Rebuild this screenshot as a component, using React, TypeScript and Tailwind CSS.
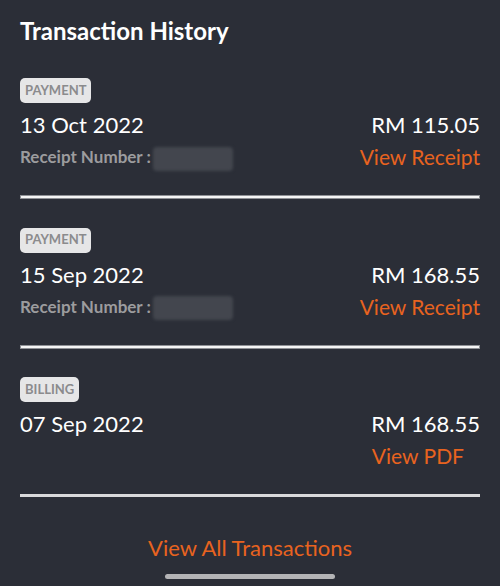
const ORANGE = 'text-[#e8631f]';

type Txn = {
  kind: string;
  date: string;
  amount: string;
  link: string;
  receipt?: boolean;
  lastLine?: boolean;
};

const TXNS: Txn[] = [
  { kind: 'PAYMENT', date: '13 Oct 2022', amount: 'RM 115.05', link: 'View Receipt', receipt: true },
  { kind: 'PAYMENT', date: '15 Sep 2022', amount: 'RM 168.55', link: 'View Receipt', receipt: true },
  { kind: 'BILLING', date: '07 Sep 2022', amount: 'RM 168.55', link: 'View PDF', lastLine: true },
];

function Redacted() {
  return (
    <span className="inline-block align-middle ml-[2px] w-[80px] h-[24px] rounded-[4px] bg-[#43464e] blur-[1.5px]" />
  );
}

function TxnItem({ t, first }: { t: Txn; first: boolean }) {
  return (
    <div className={first ? 'pt-[32px]' : 'pt-[27px]'}>
      <span className="inline-flex items-center h-[25px] px-[5px] rounded-[5px] bg-[#e6e6e7] text-[#8b8b8d] text-[13px] font-bold">
        {t.kind}
      </span>
      <div className="mt-[8px] flex justify-between items-start">
        <div className="flex flex-col">
          <span className="text-white text-[22px] leading-[27px]">{t.date}</span>
          <span className="mt-[6px] h-[25px] text-[#9c9c9e] text-[17px] font-bold leading-[25px] whitespace-nowrap">
            {t.receipt && (<>Receipt Number :<Redacted /></>)}
          </span>
        </div>
        <div className="flex flex-col items-end">
          <span className="text-white text-[22px] leading-[27px]">{t.amount}</span>
          <span className={`mt-[6px] text-[21px] leading-[25px] ${ORANGE} ${t.lastLine ? 'pr-[16px]' : ''}`}>{t.link}</span>
        </div>
      </div>
      {t.lastLine ? (
        <div className="mt-[26px] h-[3px] bg-[#d9d9db]" />
      ) : (
        <div className="mt-[26px] h-[4px] border border-[#8e9095] bg-[#f4f4f4]" />
      )}
    </div>
  );
}

export default function App() {
  return (
    <div className="w-[500px] h-[586px] bg-[#2b2e37] overflow-hidden flex flex-col" style={{ fontFamily: 'Lato, "Open Sans", sans-serif' }}>
      <div className="px-5">
        <h1 className="pt-[16px] text-white text-[24px] font-bold leading-[29px]">Transaction History</h1>
        {TXNS.map((t, i) => <TxnItem key={i} t={t} first={i === 0} />)}
      </div>
      <div className="mt-[37px] text-center">
        <span className={`text-[22px] leading-[27px] ${ORANGE}`}>View All Transactions</span>
      </div>
      <div className="mt-[12px] mx-auto w-[170px] h-[5px] rounded-full bg-[#b4b4b6]" />
    </div>
  );
}
